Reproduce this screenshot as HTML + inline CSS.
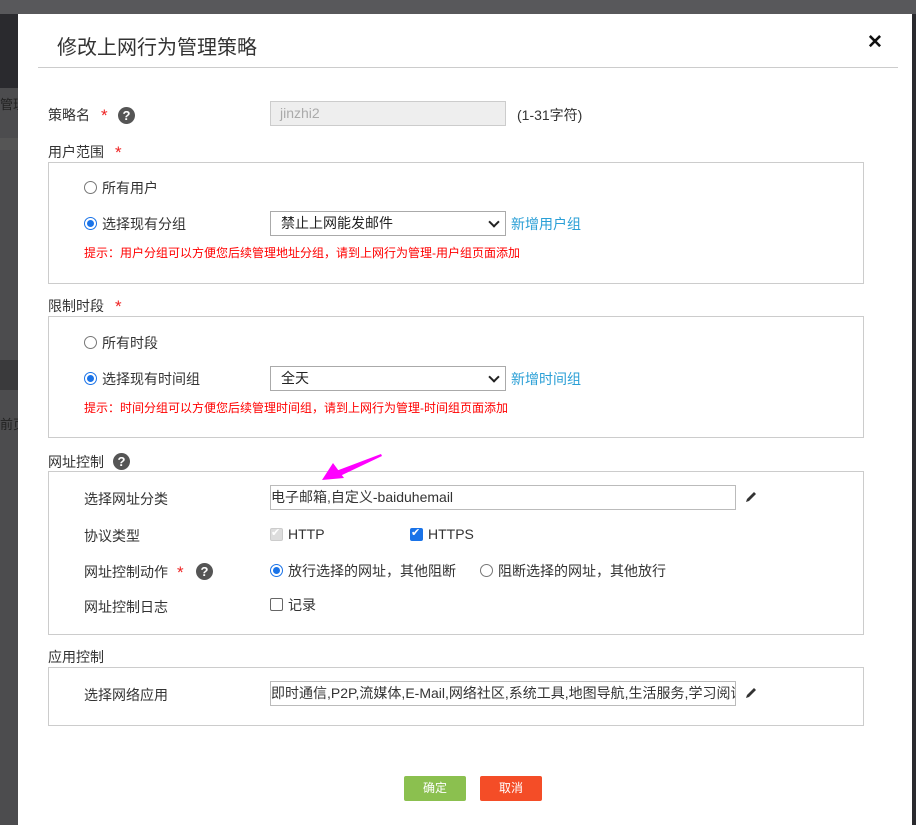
<!DOCTYPE html>
<html><head><meta charset="utf-8"><style>
*{box-sizing:border-box;margin:0;padding:0}
body{width:916px;height:825px;overflow:hidden;position:relative;background:#2a2a2e;font-family:"Liberation Sans","Noto Sans CJK SC",sans-serif;font-size:14px;color:#333}
.a{position:absolute;white-space:nowrap}
.t{margin-top:-1px}
.box{position:absolute;left:48px;width:816px;border:1px solid #ccc}
.inp{position:absolute;height:25px;border:1px solid #bbb;background:#fff;line-height:23px;font-size:14px;color:#333;overflow:hidden;white-space:nowrap}
.sel{position:absolute;height:25px;border:1px solid #aaa;background:#fff;line-height:23px;font-size:14px;padding-left:10px;color:#222}
.sel:after{content:"";position:absolute;right:7px;top:6px;width:6px;height:6px;border-right:2px solid #222;border-bottom:2px solid #222;transform:rotate(45deg)}
.r{position:absolute;width:13px;height:13px;border:1px solid #777;border-radius:50%;background:#fff}
.r.on{border:1px solid #1a73e8}
.r.on:after{content:"";position:absolute;left:2px;top:2px;width:7px;height:7px;border-radius:50%;background:#1a73e8}
.cb{position:absolute;width:13px;height:13px;border:1px solid #666;border-radius:2px;background:#fff}
.q{position:absolute;width:17px;height:17px;border-radius:50%;background:#555;color:#fff;font-size:13px;font-weight:bold;text-align:center;line-height:17px}
.st{position:absolute;color:#e22;font-size:17px}
.hint{position:absolute;color:#f00;font-size:12px;white-space:nowrap;margin-top:-2px}
.lk{position:absolute;color:#2a9fd6;font-size:14px;margin-top:-1px}
</style></head><body>
<div class="a" style="left:0;top:0;width:916px;height:14px;background:#58585b"></div>
<div class="a" style="left:0;top:88px;width:18px;height:737px;background:#4c4c4e"></div>
<div class="a" style="left:0;top:138px;width:18px;height:12px;background:#555"></div>
<div class="a" style="left:0;top:360px;width:18px;height:30px;background:#3a3a3c"></div>
<div class="a t" style="left:0;top:95px;color:#222;font-size:13px;width:18px;overflow:hidden">管理</div>
<div class="a t" style="left:0;top:415px;color:#222;font-size:13px;width:18px;overflow:hidden">前页</div>

<div class="a" style="left:18px;top:14px;width:894px;height:811px;background:#fff"></div>
<div class="a" style="left:57px;top:31px;font-size:20px;color:#333">修改上网行为管理策略</div>
<div class="a" style="left:867px;top:31px;font-size:19px;font-weight:bold;color:#111">✕</div>
<div class="a" style="left:38px;top:67px;width:860px;height:1px;background:#ccc"></div>

<div class="a t" style="left:48px;top:106px">策略名</div>
<div class="st" style="left:101px;top:106px">*</div>
<div class="q" style="left:118px;top:107px">?</div>
<div class="inp" style="left:270px;top:101px;width:236px;background:#eee;border-color:#ccc;color:#aaa;padding-left:9px">jinzhi2</div>
<div class="a t" style="left:517px;top:106px">(1-31字符)</div>

<div class="a t" style="left:48px;top:143px">用户范围</div>
<div class="st" style="left:115px;top:143px">*</div>
<div class="box" style="top:162px;height:122px"></div>
<div class="r" style="left:84px;top:181px"></div>
<div class="a t" style="left:102px;top:179px">所有用户</div>
<div class="r on" style="left:84px;top:217px"></div>
<div class="a t" style="left:102px;top:215px">选择现有分组</div>
<div class="sel" style="left:270px;top:211px;width:236px">禁止上网能发邮件</div>
<div class="lk" style="left:511px;top:215px">新增用户组</div>
<div class="hint" style="left:84px;top:246px">提示：用户分组可以方便您后续管理地址分组，请到上网行为管理-用户组页面添加</div>

<div class="a t" style="left:48px;top:297px">限制时段</div>
<div class="st" style="left:115px;top:297px">*</div>
<div class="box" style="top:316px;height:122px"></div>
<div class="r" style="left:84px;top:336px"></div>
<div class="a t" style="left:102px;top:334px">所有时段</div>
<div class="r on" style="left:84px;top:372px"></div>
<div class="a t" style="left:102px;top:370px">选择现有时间组</div>
<div class="sel" style="left:270px;top:366px;width:236px">全天</div>
<div class="lk" style="left:511px;top:370px">新增时间组</div>
<div class="hint" style="left:84px;top:401px">提示：时间分组可以方便您后续管理时间组，请到上网行为管理-时间组页面添加</div>

<div class="a t" style="left:48px;top:453px">网址控制</div>
<div class="q" style="left:113px;top:453px">?</div>
<div class="box" style="top:471px;height:164px"></div>
<div class="a t" style="left:84px;top:490px">选择网址分类</div>
<div class="inp" style="left:270px;top:485px;width:466px">电子邮箱,自定义-baiduhemail</div>
<svg class="a" style="left:744px;top:490px" width="14" height="14" viewBox="0 0 14 14"><path d="M2 12 L3 9 L10 2 L12 4 L5 11 Z" fill="#333"/></svg>
<div class="a t" style="left:84px;top:527px">协议类型</div>
<div class="cb" style="left:270px;top:528px;background:#ddd;border-color:#ccc"></div>
<div class="a" style="left:271px;top:526px;font-size:11px;color:#fff">✔</div>
<div class="a t" style="left:288px;top:527px;font-size:14px;color:#333">HTTP</div>
<div class="cb" style="left:410px;top:528px;background:#1a73e8;border-color:#1a73e8"></div>
<div class="a" style="left:411px;top:526px;font-size:11px;color:#fff">✔</div>
<div class="a t" style="left:428px;top:527px;font-size:14px;color:#333">HTTPS</div>
<div class="a t" style="left:84px;top:563px">网址控制动作</div>
<div class="st" style="left:177px;top:563px">*</div>
<div class="q" style="left:196px;top:563px">?</div>
<div class="r on" style="left:270px;top:564px"></div>
<div class="a t" style="left:288px;top:562px">放行选择的网址，其他阻断</div>
<div class="r" style="left:480px;top:564px"></div>
<div class="a t" style="left:498px;top:562px">阻断选择的网址，其他放行</div>
<div class="a t" style="left:84px;top:598px">网址控制日志</div>
<div class="cb" style="left:270px;top:598px"></div>
<div class="a t" style="left:288px;top:596px">记录</div>

<div class="a t" style="left:48px;top:648px">应用控制</div>
<div class="box" style="top:667px;height:59px"></div>
<div class="a t" style="left:84px;top:686px">选择网络应用</div>
<div class="inp" style="left:270px;top:681px;width:466px">即时通信,P2P,流媒体,E-Mail,网络社区,系统工具,地图导航,生活服务,学习阅读</div>
<svg class="a" style="left:744px;top:686px" width="14" height="14" viewBox="0 0 14 14"><path d="M2 12 L3 9 L10 2 L12 4 L5 11 Z" fill="#333"/></svg>

<div class="a" style="left:404px;top:776px;width:62px;height:25px;background:#8bc04f;border-radius:2px;color:#fff;text-align:center;line-height:25px;font-size:12px">确定</div>
<div class="a" style="left:480px;top:776px;width:62px;height:25px;background:#f44d27;border-radius:2px;color:#fff;text-align:center;line-height:25px;font-size:12px">取消</div>

<svg class="a" style="left:0;top:0" width="916" height="825"><polygon points="381,454 382,456 340,476 336,471" fill="#f0f"/><polygon points="322,480 333,463 344,478" fill="#f0f"/></svg>
</body></html>
